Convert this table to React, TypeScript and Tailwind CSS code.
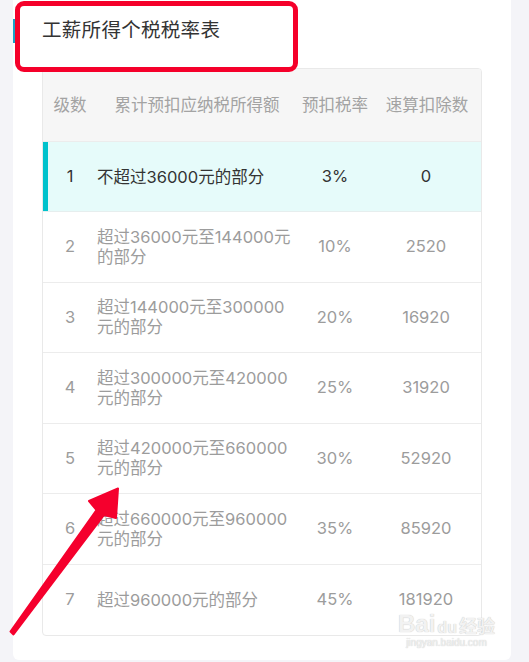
import React from 'react';

const rows = [
  { level: '1', range: ['不超过36000元的部分'], rate: '3%', deduct: '0', active: true },
  { level: '2', range: ['超过36000元至144000元', '的部分'], rate: '10%', deduct: '2520' },
  { level: '3', range: ['超过144000元至300000', '元的部分'], rate: '20%', deduct: '16920' },
  { level: '4', range: ['超过300000元至420000', '元的部分'], rate: '25%', deduct: '31920' },
  { level: '5', range: ['超过420000元至660000', '元的部分'], rate: '30%', deduct: '52920' },
  { level: '6', range: ['超过660000元至960000', '元的部分'], rate: '35%', deduct: '85920' },
  { level: '7', range: ['超过960000元的部分'], rate: '45%', deduct: '181920' },
];

const font = "font-['Inter','Noto_Sans_CJK_SC',sans-serif]";

const App: React.FC = () => {
  return (
    <div className={`relative w-[529px] h-[662px] overflow-hidden bg-[#f4f4f8] ${font}`}>
      {/* white panel */}
      <div className="ml-[13px] w-[498px] h-[660px] bg-white rounded-b-[6px]">
        {/* title */}
        <div className="flex items-center h-[60px] pt-[1px]">
          <div className="w-[4px] h-[24px] bg-[#1aa0c6]" />
          <h1 className="ml-[25px] text-[19.5px] leading-none text-[#333] tracking-[0.3px]">工薪所得个税税率表</h1>
        </div>

        {/* table */}
        <div className="mt-[8px] ml-[29px] w-[440px] border border-[#e9e9e9] rounded-[4px] overflow-hidden text-[16.5px]">
          <div className="grid grid-cols-[54px_200px_76px_1fr] items-center h-[73px] bg-[#f6f6f6] text-[#a3a3a3] border-b border-[#ececec]">
            <div className="text-center">级数</div>
            <div className="text-center">累计预扣应纳税所得额</div>
            <div className="text-center">预扣税率</div>
            <div className="text-center">速算扣除数</div>
          </div>
          {rows.map((r, i) => (
            <div
              key={r.level}
              className={
                r.active
                  ? 'relative grid grid-cols-[54px_200px_76px_1fr] items-center h-[70px] bg-[#e6fbfa] text-[#333] border-b border-[#e6eeee]'
                  : `grid grid-cols-[54px_200px_76px_1fr] items-center h-[70.5px] text-[#9c9c9c] ${i < rows.length - 1 ? 'border-b border-[#ececec]' : ''}`
              }
            >
              {r.active && <div className="absolute left-0 top-0 bottom-0 w-[5px] bg-[#00c2cc]" />}
              <div className="text-center">{r.level}</div>
              <div className="leading-[20px] whitespace-nowrap">
                {r.range.map((line) => (
                  <div key={line}>{line}</div>
                ))}
              </div>
              <div className="text-center">{r.rate}</div>
              <div className="text-center pr-[2px]">{r.deduct}</div>
            </div>
          ))}
        </div>
      </div>

      {/* red annotation box */}
      <div className="absolute left-[15px] top-[1px] w-[283px] h-[71px] border-[5px] border-[#f5002a] rounded-[9px]" />

      {/* red arrow */}
      <svg className="absolute left-0 top-0 pointer-events-none" width="529" height="662" viewBox="0 0 529 662">
        <polygon
          points="10.5,631.5 96.5,510 89,501 118,488.5 116,518 104,515 13.5,634.5"
          fill="#f5002d"
          stroke="#f5002d"
          strokeWidth="2"
          strokeLinejoin="round"
        />
      </svg>

      {/* watermark */}
      <div className="absolute left-[398px] top-[612px] flex flex-col items-center text-[#f2f2f2] [text-shadow:0_0_1px_#b8b8b8] pointer-events-none">
        <div className="flex items-end leading-none">
          <span className="text-[24px] font-bold font-['Liberation_Sans',sans-serif]">Bai</span>
          <span className="text-[16px] font-bold font-['Liberation_Sans',sans-serif] px-[2px]">du</span>
          <span className="text-[18px] font-bold">经验</span>
        </div>
        <div className="text-[10px] leading-[14px] font-['Liberation_Sans',sans-serif]">jingyan.baidu.com</div>
      </div>
    </div>
  );
};

export default App;
